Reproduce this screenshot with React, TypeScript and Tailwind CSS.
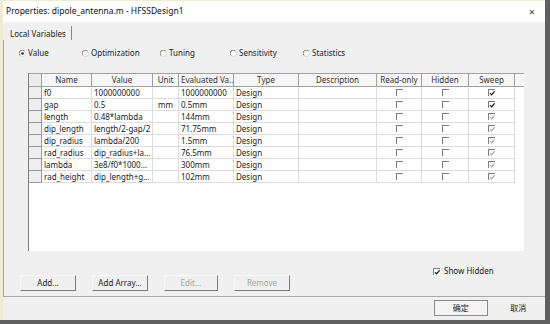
import React from 'react'

const rows = [
  { name: 'f0', value: '1000000000', unit: '', ev: '1000000000', sweepOn: true },
  { name: 'gap', value: '0.5', unit: 'mm', ev: '0.5mm', sweepOn: true },
  { name: 'length', value: '0.48*lambda', unit: '', ev: '144mm', sweepOn: false },
  { name: 'dip_length', value: 'length/2-gap/2', unit: '', ev: '71.75mm', sweepOn: false },
  { name: 'dip_radius', value: 'lambda/200', unit: '', ev: '1.5mm', sweepOn: false },
  { name: 'rad_radius', value: 'dip_radius+la...', unit: '', ev: '76.5mm', sweepOn: false },
  { name: 'lambda', value: '3e8/f0*1000...', unit: '', ev: '300mm', sweepOn: false },
  { name: 'rad_height', value: 'dip_length+g...', unit: '', ev: '102mm', sweepOn: false },
]

const radios = [
  { label: 'Value', w: 'w-[63px]', on: true },
  { label: 'Optimization', w: 'w-[78px]', on: false },
  { label: 'Tuning', w: 'w-[70px]', on: false },
  { label: 'Sensitivity', w: 'w-[73px]', on: false },
  { label: 'Statistics', w: 'w-[60px]', on: false },
]

function Radio({ on }: { on: boolean }) {
  return (
    <svg width="7" height="7" viewBox="0 0 7 7" className="shrink-0">
      <circle cx="3.5" cy="3.5" r="3" fill="#fff" stroke="#d0d0d0" strokeWidth="0.8" />
      <path d="M1 5.5 A3 3 0 0 1 5.5 1" fill="none" stroke="#777" strokeWidth="0.9" />
      {on && <circle cx="3.5" cy="3.5" r="1.3" fill="#222" />}
    </svg>
  )
}

function Check({ checked, gray }: { checked?: boolean; gray?: boolean }) {
  return (
    <div className="w-[7px] h-[7px] bg-white border-t border-l border-[#7d7d7d] relative">
      {checked && (
        <svg width="7" height="7" viewBox="0 0 7 7" className="absolute left-0 top-0">
          <path d="M1 3.2 L2.6 4.8 L5.6 1.3" fill="none" stroke={gray ? '#a8a8a8' : '#111'} strokeWidth="1.2" />
        </svg>
      )}
    </div>
  )
}

function Btn({ label, disabled, w }: { label: string; disabled?: boolean; w: string }) {
  return (
    <div className={`${w} h-[16px] flex items-center justify-center border-r border-b border-[#7a7a7a] border-t border-l border-t-[#f8f8f8] border-l-[#f8f8f8] ${disabled ? 'text-[#a6a6a6]' : 'text-[#222]'}`}>
      {label}
    </div>
  )
}

export default function App() {
  const cell = 'h-[12px] border-r border-b border-[#dcdcdc] flex items-center px-[2px] truncate'
  return (
    <div className="w-[550px] h-[324px] bg-[#5f5f5f] overflow-hidden text-[8px] leading-none text-[#222]" style={{ fontFamily: '"Noto Sans", "Noto Sans CJK SC", sans-serif' }}>
      <div className="w-[545px] h-[320px] flex flex-col border-l-[3px] border-t border-[#eeecd2] bg-[#f0f0f0]">
        {/* title bar */}
        <div className="h-[21px] bg-white flex items-center justify-between pl-[3px] pr-[10px] text-[8.5px] text-[#111]">
          <span>Properties: dipole_antenna.m - HFSSDesign1</span>
          <span className="text-[11px] text-[#444]">×</span>
        </div>

        {/* tab header */}
        <div className="h-[18px] flex items-end pl-[7px]">
          <div className="h-[14px] flex items-center pt-[1px] pr-[5px] border-r border-[#888]">Local Variables</div>
        </div>

        {/* tab page */}
        <div className="h-[257px] border-l border-b border-[#a8a8a8] flex flex-col">
          <div className="h-[10px] mt-[8px] flex items-center pl-[15px]">
            {radios.map(r => (
              <div key={r.label} className={`${r.w} flex items-center gap-[2px]`}>
                <Radio on={r.on} />
                <span>{r.label}</span>
              </div>
            ))}
          </div>

          {/* grid */}
          <div className="mt-[15px] ml-[24px] w-[496px] h-[178px] bg-white border-l border-[#7d7d7d]">
            <div className="flex h-[14px] bg-[#f6f6f6] border-t border-b border-[#a0a0a0] text-[#333]">
              <div className="w-[13px] border-r border-[#a0a0a0] bg-[#ececec]" />
              <div className="w-[50px] border-r border-[#a0a0a0] flex items-center justify-center">Name</div>
              <div className="w-[61px] border-r border-[#a0a0a0] flex items-center justify-center">Value</div>
              <div className="w-[26px] border-r border-[#a0a0a0] flex items-center justify-center">Unit</div>
              <div className="w-[55px] border-r border-[#a0a0a0] flex items-center pl-[2px] truncate">Evaluated Va...</div>
              <div className="w-[65px] border-r border-[#a0a0a0] flex items-center justify-center">Type</div>
              <div className="w-[78px] border-r border-[#a0a0a0] flex items-center justify-center">Description</div>
              <div className="w-[45px] border-r border-[#a0a0a0] flex items-center justify-center">Read-only</div>
              <div className="w-[47px] border-r border-[#a0a0a0] flex items-center justify-center">Hidden</div>
              <div className="w-[46px] border-r border-[#a0a0a0] flex items-center justify-center">Sweep</div>
              <div className="w-[9px]" />
            </div>
            {rows.map(r => (
              <div key={r.name} className="flex">
                <div className="w-[13px] h-[12px] bg-[#eeeeee] border-r border-b border-[#9a9a9a]" />
                <div className={`w-[50px] ${cell}`}>{r.name}</div>
                <div className={`w-[61px] ${cell}`}>{r.value}</div>
                <div className={`w-[26px] ${cell} justify-center`}>{r.unit}</div>
                <div className={`w-[55px] ${cell}`}>{r.ev}</div>
                <div className={`w-[65px] ${cell}`}>Design</div>
                <div className={`w-[78px] ${cell}`} />
                <div className={`w-[45px] ${cell} justify-center`}><Check /></div>
                <div className={`w-[47px] ${cell} justify-center`}><Check /></div>
                <div className={`w-[46px] ${cell} justify-center`}><Check checked gray={!r.sweepOn} /></div>
              </div>
            ))}
          </div>

          {/* show hidden */}
          <div className="h-[10px] mt-[15px] flex items-center pl-[429px] gap-[4px]">
            <Check checked />
            <span>Show Hidden</span>
          </div>

          {/* buttons */}
          <div className="h-[16px] mt-[-1px] flex pl-[16px] gap-[16px]">
            <Btn label="Add..." w="w-[56px]" />
            <Btn label="Add Array..." w="w-[56px]" />
            <Btn label="Edit..." w="w-[54px]" disabled />
            <Btn label="Remove" w="w-[56px]" disabled />
          </div>
        </div>

        {/* dialog buttons */}
        <div className="flex items-start pt-[3px] pl-[431px]">
          <div className="w-[54px] h-[16px] border border-[#8a8a8a] bg-[#f4f4f4] flex items-center justify-center">确定</div>
          <div className="w-[54px] h-[16px] ml-[4px] flex items-center justify-center">取消</div>
        </div>
      </div>
    </div>
  )
}
